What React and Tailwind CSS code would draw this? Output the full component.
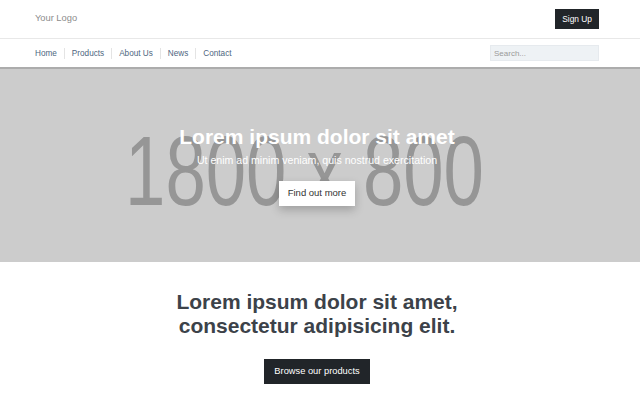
export default function App() {
  const links = ['Home', 'Products', 'About Us', 'News', 'Contact']

  return (
    <div className="w-[640px] h-[400px] overflow-hidden bg-white font-['Liberation_Sans',Arial,sans-serif]">
      <header className="h-[39px] flex items-center justify-between pl-[35px] pr-[41px] border-b border-[#e8e8e8]">
        <span className="text-[9.3px] text-[#8c8c8c]">Your Logo</span>
        <button className="h-[20px] px-[7px] bg-[#212529] text-white text-[8.4px] leading-none">Sign Up</button>
      </header>

      <nav className="h-[28px] flex items-center justify-between pl-[35px] pr-[41px]">
        <ul className="flex items-center">
          {links.map((l, i) => (
            <li key={l} className={i === 0 ? 'pr-[7px] text-[8.2px] leading-[11px] text-[#4e6680]' : 'px-[7px] text-[8.2px] leading-[11px] text-[#4e6680] border-l border-[#e4e4e4]'}>
              {l}
            </li>
          ))}
        </ul>
        <input
          placeholder="Search..."
          className="w-[109px] h-[16px] bg-[#eef2f5] border border-[#e6eaee] px-[3px] text-[8px] text-[#555] placeholder:text-[#9a9a9a] outline-none"
        />
      </nav>

      <section className="relative h-[195px] bg-[#cccccc] border-t-2 border-[#acacac] overflow-hidden">
        {/* placeholder image text */}
        <div className="absolute inset-0 flex items-center justify-center">
          <span className="block text-[98px] leading-none text-[#969696] whitespace-nowrap scale-x-[0.74] translate-y-[5px] -translate-x-[16px]">1800 x 800</span>
        </div>
        <div className="relative h-full flex flex-col items-center justify-center pr-[6px] pb-[1px]">
          <h1 className="text-[21px] leading-[24px] font-bold text-white">Lorem ipsum dolor sit amet</h1>
          <p className="mt-[4px] text-[10.6px] leading-[15px] text-white">Ut enim ad minim veniam, quis nostrud exercitation</p>
          <button className="mt-[13px] h-[25px] px-[9px] bg-white text-[#333] text-[9.5px] shadow-[0_4px_10px_rgba(0,0,0,0.22)]">Find out more</button>
        </div>
      </section>

      <section className="flex flex-col items-center pt-[28px] pr-[6px]">
        <h2 className="text-[21px] leading-[24px] font-bold text-[#3c4249] text-center">
          Lorem ipsum dolor sit amet,<br />consectetur adipisicing elit.
        </h2>
        <button className="mt-[21px] h-[25px] px-[10px] bg-[#212529] text-white text-[9.3px]">Browse our products</button>
      </section>
    </div>
  )
}
